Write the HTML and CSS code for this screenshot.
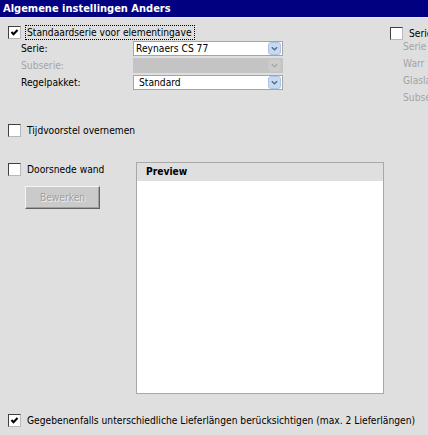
FILE: index.html
```html
<!DOCTYPE html>
<html>
<head>
<meta charset="utf-8">
<link rel="stylesheet" href="styles.css">
</head>
<body>
<div class="window">
  <div class="titlebar">Algemene instellingen Anders</div>
  <div class="top">
    <div class="left">
      <div class="cbrow first">
        <span class="cb"><svg viewBox="0 0 11 11"><polyline points="2.5,5 4.5,7.2 8.5,3" /></svg></span>
        <span class="focus">Standaardserie voor elementingave</span>
      </div>
      <div class="form">
        <span class="lbl">Serie:</span>
        <div class="select"><span class="val">Reynaers CS 77</span><span class="arrow"><svg viewBox="0 0 13 13"><rect x="0.5" y="0.5" width="12" height="12" rx="2.5"/><path d="M3.8 5.2 L6.5 7.8 L9.2 5.2"/></svg></span></div>
        <span class="lbl dis">Subserie:</span>
        <div class="select disabled"><span class="val"></span><span class="arrow"><svg viewBox="0 0 13 13"><rect x="0.5" y="0.5" width="12" height="12" rx="2.5"/><path d="M3.8 5.2 L6.5 7.8 L9.2 5.2"/></svg></span></div>
        <span class="lbl">Regelpakket:</span>
        <div class="select"><span class="val pad">Standard</span><span class="arrow"><svg viewBox="0 0 13 13"><rect x="0.5" y="0.5" width="12" height="12" rx="2.5"/><path d="M3.8 5.2 L6.5 7.8 L9.2 5.2"/></svg></span></div>
      </div>
    </div>
    <div class="right">
      <div class="cbrow">
        <span class="cb empty"></span>
        <span class="rlabel">Serie</span>
      </div>
      <div class="rlist">
        <span>Serie</span>
        <span>Warr</span>
        <span>Glasla</span>
        <span>Subse</span>
      </div>
    </div>
  </div>
  <div class="cbrow tijd">
    <span class="cb empty"></span>
    <span>Tijdvoorstel overnemen</span>
  </div>
  <div class="middle">
    <div class="mleft">
      <div class="cbrow">
        <span class="cb empty"></span>
        <span>Doorsnede wand</span>
      </div>
      <div class="btn">Bewerken</div>
    </div>
    <div class="preview">
      <div class="phead">Preview</div>
      <div class="pbody"></div>
    </div>
  </div>
  <div class="cbrow bottom">
    <span class="cb"><svg viewBox="0 0 11 11"><polyline points="2.5,5 4.5,7.2 8.5,3" /></svg></span>
    <span>Gegebenenfalls unterschiedliche Lieferlängen berücksichtigen (max. 2 Lieferlängen)</span>
  </div>
</div>
</body>
</html>
```
FILE: styles.css
```css
html, body {
  margin: 0;
  padding: 0;
  background: #dfdfdf;
  width: 428px;
  height: 435px;
  overflow: hidden;
}
.window {
  font-family: "DejaVu Sans Condensed", "DejaVu Sans", sans-serif;
  font-size: 10.2px;
  color: #000;
  width: 428px;
}
.titlebar {
  height: 17px;
  line-height: 17px;
  background: #000080;
  color: #fff;
  font-weight: bold;
  font-size: 11px;
  padding-left: 3px;
  border-bottom: 1px solid #e8e8e8;
}
.top {
  display: flex;
  align-items: flex-start;
  white-space: nowrap;
  height: 89px;
}
.left {
  width: 382px;
  flex: none;
  padding-left: 8px;
  box-sizing: border-box;
}
.cbrow {
  display: flex;
  align-items: center;
  height: 13px;
  white-space: nowrap;
}
.cbrow.first {
  margin-top: 8px;
}
.cb {
  width: 13px;
  height: 13px;
  box-sizing: border-box;
  background: #fff;
  border-top: 1px solid #404040;
  border-left: 1px solid #404040;
  border-right: 1px solid #b8b8b8;
  border-bottom: 1px solid #b8b8b8;
  flex: none;
  margin-right: 6px;
  display: block;
}
.cb svg {
  display: block;
  width: 11px;
  height: 11px;
}
.cb polyline {
  fill: none;
  stroke: #000;
  stroke-width: 2;
}
.focus {
  outline: 1px dotted #000;
  outline-offset: 1px;
  padding: 0 1px 0 0;
}
.form {
  display: grid;
  grid-template-columns: 112px 150px;
  grid-auto-rows: 15px;
  row-gap: 2px;
  margin-top: 2px;
  padding-left: 13px;
  align-items: center;
}
.lbl {
  line-height: 15px;
}
.lbl.dis {
  color: #a4a4a4;
}
.select {
  height: 15px;
  box-sizing: border-box;
  border: 1px solid #a5a5a5;
  background: #fff;
  display: flex;
  align-items: center;
  justify-content: space-between;
}
.select .val {
  padding-left: 2px;
  line-height: 13px;
}
.select .val.pad {
  padding-left: 5px;
}
.select .arrow {
  width: 13px;
  height: 13px;
  margin-right: 1px;
}
.arrow svg {
  display: block;
  width: 13px;
  height: 13px;
}
.arrow rect {
  fill: #c9d9ef;
  stroke: #adc3e3;
}
.arrow path {
  fill: none;
  stroke: #4e6c98;
  stroke-width: 1.4;
}
.select.disabled {
  border-color: #c4c4c4;
  background: #c4c4c4;
}
.select.disabled rect {
  fill: #cccccc;
  stroke: #c8c8c8;
}
.select.disabled path {
  stroke: #a9a9a9;
}
.right {
  flex: none;
  padding-left: 8px;
  padding-top: 9px;
}
.rlist {
  display: flex;
  flex-direction: column;
  padding-left: 13px;
  margin-top: -2px;
  color: #a4a4a4;
  line-height: 17px;
}
.tijd {
  margin-top: 17px;
  padding-left: 8px;
}
.middle {
  display: flex;
  margin-top: 25px;
}
.mleft {
  width: 136px;
  flex: none;
  padding-left: 8px;
  box-sizing: border-box;
  padding-top: 1px;
}
.btn {
  width: 75px;
  height: 23px;
  box-sizing: border-box;
  margin-top: 10px;
  margin-left: 17px;
  background: #cacaca;
  border-top: 1px solid #f4f4f4;
  border-left: 1px solid #f4f4f4;
  border-right: 1px solid #606060;
  border-bottom: 1px solid #606060;
  box-shadow: inset -1px -1px 0 #a0a0a0;
  color: #a0a0a0;
  text-shadow: 1px 1px 0 #f0f0f0;
  display: flex;
  align-items: center;
  justify-content: center;
}
.preview {
  width: 248px;
  height: 232px;
  box-sizing: border-box;
  border: 1px solid #a8a8a8;
  display: flex;
  flex-direction: column;
}
.phead {
  height: 18px;
  line-height: 18px;
  background: #dfdfdf;
  font-weight: bold;
  padding-left: 9px;
}
.pbody {
  flex: 1;
  background: #fff;
}
.bottom {
  margin-top: 20px;
  padding-left: 8px;
}
```
